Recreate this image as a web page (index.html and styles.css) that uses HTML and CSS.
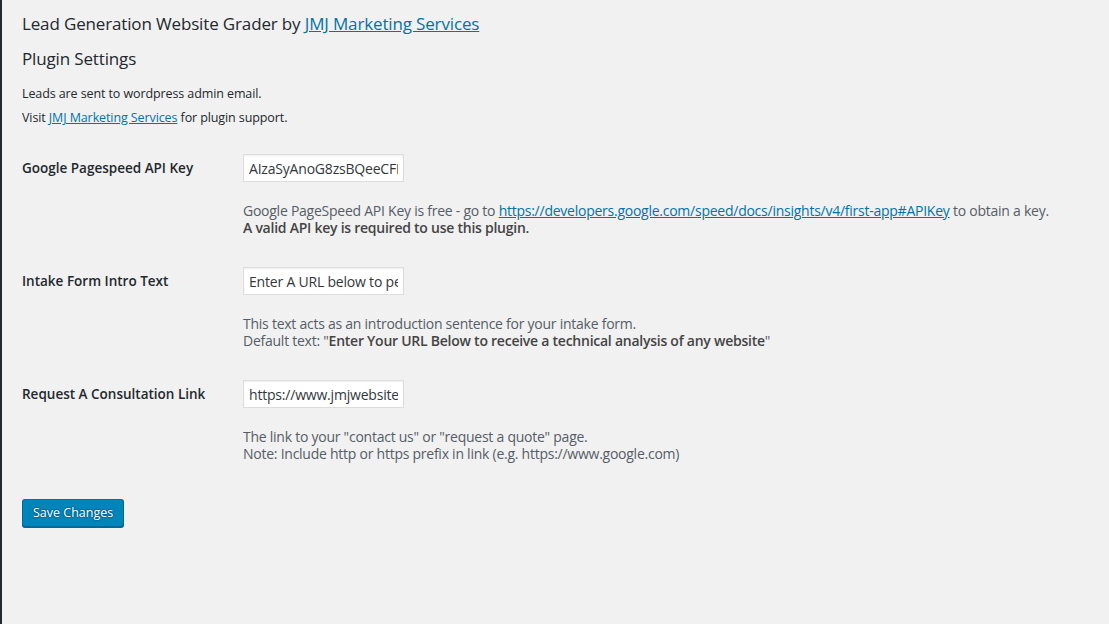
FILE: index.html
```html
<!DOCTYPE html>
<html lang="en">
<head>
<meta charset="utf-8">
<title>Lead Generation Website Grader</title>
<link rel="stylesheet" href="styles.css">
</head>
<body>
<div class="page">
  <div class="sidebar-edge"></div>
  <main class="wrap">
    <h2 class="title">Lead Generation Website Grader by <a href="#">JMJ Marketing Services</a></h2>
    <h2 class="subtitle">Plugin Settings</h2>
    <p class="note">Leads are sent to wordpress admin email.</p>
    <p class="note">Visit <a href="#">JMJ Marketing Services</a> for plugin support.</p>

    <form class="settings">
      <div class="row">
        <label class="label" for="k1">Google Pagespeed API Key</label>
        <div class="field">
          <input class="input" id="k1" type="text" value="AIzaSyAnoG8zsBQeeCFMxxxxxxxxxxxx">
          <p class="desc">Google PageSpeed API Key is free - go to <a href="#">https://developers.google.com/speed/docs/insights/v4/first-app#APIKey</a> to obtain a key.<br><strong>A valid API key is required to use this plugin.</strong></p>
        </div>
      </div>
      <div class="row">
        <label class="label" for="k2">Intake Form Intro Text</label>
        <div class="field">
          <input class="input" id="k2" type="text" value="Enter A URL below to perform an analysis">
          <p class="desc">This text acts as an introduction sentence for your intake form.<br>Default text: "<strong>Enter Your URL Below to receive a technical analysis of any website</strong>"</p>
        </div>
      </div>
      <div class="row">
        <label class="label" for="k3">Request A Consultation Link</label>
        <div class="field">
          <input class="input" id="k3" type="text" value="https://www.jmjwebsitedesign.com/contact">
          <p class="desc">The link to your "contact us" or "request a quote" page.<br>Note: Include http or https prefix in link (e.g. https://www.google.com)</p>
        </div>
      </div>
      <div class="actions">
        <button type="button" class="button-primary">Save Changes</button>
      </div>
    </form>
  </main>
</div>
</body>
</html>
```
FILE: styles.css
```css
html, body {
  margin: 0;
  padding: 0;
  height: 100%;
}
body {
  background: #f1f1f1;
  color: #23282d;
  font-family: "Open Sans", "Noto Sans", sans-serif;
  font-size: 13px;
}
.page {
  display: flex;
  min-height: 100%;
}
.sidebar-edge {
  width: 2px;
  flex: none;
  background: #23282d;
}
.wrap {
  flex: 1;
  padding: 10px 20px 0 20px;
}
a {
  color: #0073aa;
  text-decoration: underline;
}
.title, .subtitle {
  font-size: 17px;
  font-weight: 400;
  margin: 0;
  line-height: 27px;
  letter-spacing: -0.15px;
}
.subtitle {
  margin-top: 8px;
}
.note {
  margin: 0;
  font-size: 12.5px;
  line-height: 24px;
  letter-spacing: -0.1px;
}
.subtitle + .note {
  margin-top: 10px;
}
.settings {
  margin-top: 24px;
}
.row {
  display: grid;
  grid-template-columns: 221px 1fr;
  margin-bottom: 31px;
}
.label {
  font-size: 13.5px;
  font-weight: 600;
  line-height: 28px;
  letter-spacing: 0;
}
.field {
  display: flex;
  flex-direction: column;
  align-items: flex-start;
}
.input {
  box-sizing: border-box;
  width: 161px;
  height: 28px;
  margin: 0;
  padding: 3px 5px;
  border: 1px solid #ddd;
  background: #fff;
  box-shadow: inset 0 1px 2px rgba(0,0,0,.07);
  color: #32373c;
  font-family: "Open Sans", "Noto Sans", sans-serif;
  font-size: 14px;
  letter-spacing: -0.2px;
}
.desc {
  margin: 20px 0 0;
  color: #555d66;
  font-size: 14px;
  line-height: 17px;
  letter-spacing: -0.25px;
}
.desc strong {
  font-weight: 600;
  color: #444;
}
.actions {
  padding-top: 6px;
}
.button-primary {
  height: 28px;
  padding: 0 10px 1px;
  background: #0085ba;
  border: 1px solid;
  border-color: #0073aa #006799 #006799;
  border-radius: 3px;
  box-shadow: 0 1px 0 #006799;
  color: #fff;
  font-family: "Open Sans", "Noto Sans", sans-serif;
  font-size: 12.5px;
  letter-spacing: 0;
  text-shadow: 0 -1px 1px #006799, 1px 0 1px #006799, 0 1px 1px #006799, -1px 0 1px #006799;
  cursor: pointer;
}
```
